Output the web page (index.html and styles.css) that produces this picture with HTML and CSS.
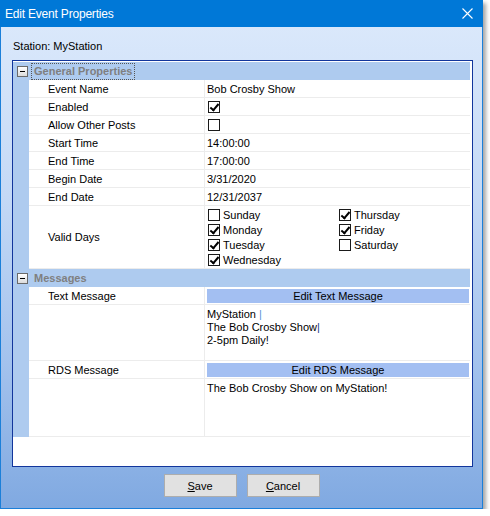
FILE: index.html
```html
<!DOCTYPE html>
<html lang="en">
<head>
    <meta charset="UTF-8">
    <title>Edit Event Properties</title>
    <link rel="stylesheet" href="styles.css">
</head>
<body>
    <div class="window">
        <div class="titlebar">
            <span class="title">Edit Event Properties</span>
            <svg class="close" width="11" height="11" viewBox="0 0 11 11">
                <path d="M0.5 0.5 L10.5 10.5 M10.5 0.5 L0.5 10.5" stroke="#fff" stroke-width="1.1" fill="none"/>
            </svg>
        </div>
        <div class="client">
            <div class="station">Station: MyStation</div>

            <div class="grid">
                <div class="cat">
                    <div class="margin"><span class="toggle"></span></div>
                    <span class="cat-label">General Properties</span>
                </div>
                <div class="row">
                    <div class="margin"></div>
                    <div class="name">Event Name</div>
                    <div class="value">Bob Crosby Show</div>
                </div>
                <div class="row">
                    <div class="margin"></div>
                    <div class="name">Enabled</div>
                    <div class="value"><span class="check on"></span></div>
                </div>
                <div class="row">
                    <div class="margin"></div>
                    <div class="name">Allow Other Posts</div>
                    <div class="value"><span class="check"></span></div>
                </div>
                <div class="row">
                    <div class="margin"></div>
                    <div class="name">Start Time</div>
                    <div class="value">14:00:00</div>
                </div>
                <div class="row">
                    <div class="margin"></div>
                    <div class="name">End Time</div>
                    <div class="value">17:00:00</div>
                </div>
                <div class="row">
                    <div class="margin"></div>
                    <div class="name">Begin Date</div>
                    <div class="value">3/31/2020</div>
                </div>
                <div class="row">
                    <div class="margin"></div>
                    <div class="name">End Date</div>
                    <div class="value">12/31/2037</div>
                </div>
                <div class="row days-row">
                    <div class="margin"></div>
                    <div class="name">Valid Days</div>
                    <div class="value">
                        <div class="days">
                            <label class="day"><span class="check"></span>Sunday</label>
                            <label class="day"><span class="check on"></span>Thursday</label>
                            <label class="day"><span class="check on"></span>Monday</label>
                            <label class="day"><span class="check on"></span>Friday</label>
                            <label class="day"><span class="check on"></span>Tuesday</label>
                            <label class="day"><span class="check"></span>Saturday</label>
                            <label class="day"><span class="check on"></span>Wednesday</label>
                        </div>
                    </div>
                </div>

                <div class="cat">
                    <div class="margin"><span class="toggle"></span></div>
                    <span class="cat-label plain">Messages</span>
                </div>
                <div class="row">
                    <div class="margin"></div>
                    <div class="name">Text Message</div>
                    <div class="value"><div class="edit-bar">Edit Text Message</div></div>
                </div>
                <div class="row text-row">
                    <div class="margin"></div>
                    <div class="name"></div>
                    <div class="value">
                        MyStation <span class="caret light">|</span><br>
                        The Bob Crosby Show<span class="caret">|</span><br>
                        2-5pm Daily!
                    </div>
                </div>
                <div class="row">
                    <div class="margin"></div>
                    <div class="name">RDS Message</div>
                    <div class="value"><div class="edit-bar">Edit RDS Message</div></div>
                </div>
                <div class="row rds-row">
                    <div class="margin"></div>
                    <div class="name"></div>
                    <div class="value">The Bob Crosby Show on MyStation!</div>
                </div>
            </div>

            <div class="buttons">
                <button class="btn"><u>S</u>ave</button>
                <button class="btn"><u>C</u>ancel</button>
            </div>
        </div>
    </div>
</body>
</html>
```

FILE: styles.css
```css
* {
    box-sizing: border-box;
}
body {
    margin: 0;
    background-color: #fff;
    font-family: 'Liberation Sans', Arial, sans-serif;
    font-size: 11px;
    color: #000;
}
.window {
    width: 483px;
    height: 509px;
    border: 1px solid #1b7fd9;
    border-top: none;
    display: flex;
    flex-direction: column;
    box-shadow: 3px 3px 4px rgba(0,0,0,0.35);
}
.titlebar {
    height: 27px;
    flex: none;
    background-color: #0078d7;
    display: flex;
    align-items: center;
    justify-content: space-between;
    padding: 0 10px 0 5px;
    margin: 0 -1px;
}
.title {
    color: #fff;
    font-size: 12px;
    letter-spacing: -0.2px;
}
.close {
    display: block;
}
.client {
    flex: 1;
    background: linear-gradient(to bottom, #dae8fb 0%, #c4d9f6 35%, #a3c2ed 70%, #80a9e1 100%);
    padding: 13px 0 0 11px;
}
.station {
    line-height: 13px;
    height: 13px;
    padding-left: 1px;
}
.grid {
    margin-top: 7px;
    width: 461px;
    height: 407px;
    border: 1px solid #12369c;
    background-color: #fff;
    padding: 1px 2px 0 0;
}
.cat {
    display: flex;
    height: 18px;
    background-color: #aecbef;
    align-items: center;
}
.margin {
    width: 16px;
    flex: none;
    align-self: stretch;
    background-color: #aecbef;
    display: flex;
    align-items: center;
    justify-content: center;
}
.toggle {
    width: 11px;
    height: 11px;
    border: 1px solid #6a6a6a;
    background: linear-gradient(to bottom, #ffffff, #dcdcdc);
    position: relative;
    margin-left: 2px;
}
.toggle::after {
    content: '';
    position: absolute;
    left: 2px;
    top: 4px;
    width: 5px;
    height: 1px;
    background-color: #000;
}
.cat-label {
    margin-left: 2px;
    padding: 1px 2px;
    border: 1px dotted #555;
    font-weight: bold;
    color: #7f7f7f;
    line-height: 13px;
}
.cat-label.plain {
    border-color: transparent;
}
.row {
    display: flex;
    height: 18px;
}
.name {
    width: 176px;
    flex: none;
    padding-left: 19px;
    border-right: 1px solid #ececec;
    border-bottom: 1px solid #ececec;
    display: flex;
    align-items: center;
}
.value {
    flex: 1;
    padding-left: 2px;
    border-bottom: 1px solid #ececec;
    display: flex;
    align-items: center;
}
.check {
    display: inline-block;
    width: 12px;
    height: 12px;
    border: 1px solid #1a1a1a;
    background-color: #fff;
    position: relative;
    margin-left: 1px;
}
.check.on::after {
    content: '';
    position: absolute;
    left: 3px;
    top: 0px;
    width: 3px;
    height: 7px;
    border-right: 2px solid #000;
    border-bottom: 2px solid #000;
    transform: rotate(40deg);
}
.days-row {
    height: 63px;
}
.days {
    display: grid;
    grid-template-columns: 131px 1fr;
    row-gap: 2px;
    width: 100%;
    padding-top: 1px;
}
.day {
    display: flex;
    align-items: center;
    height: 13px;
    gap: 3px;
}
.edit-bar {
    width: 100%;
    height: 14px;
    margin-right: 1px;
    background-color: #a3bff2;
    text-align: center;
    line-height: 14px;
}
.text-row {
    height: 56px;
}
.text-row .value,
.rds-row .value {
    display: block;
    padding-top: 3px;
    line-height: 13px;
}
.rds-row {
    height: 58px;
}
.caret {
    color: #1d3b8c;
}
.caret.light {
    color: #5a8fd8;
}
.buttons {
    margin-top: 7px;
    display: flex;
    justify-content: center;
    gap: 10px;
    padding-right: 11px;
}
.btn {
    width: 73px;
    height: 23px;
    background-color: #e1e1e1;
    border: 1px solid #adadad;
    font-family: 'Liberation Sans', Arial, sans-serif;
    font-size: 11px;
    color: #000;
    padding: 0;
}
```
